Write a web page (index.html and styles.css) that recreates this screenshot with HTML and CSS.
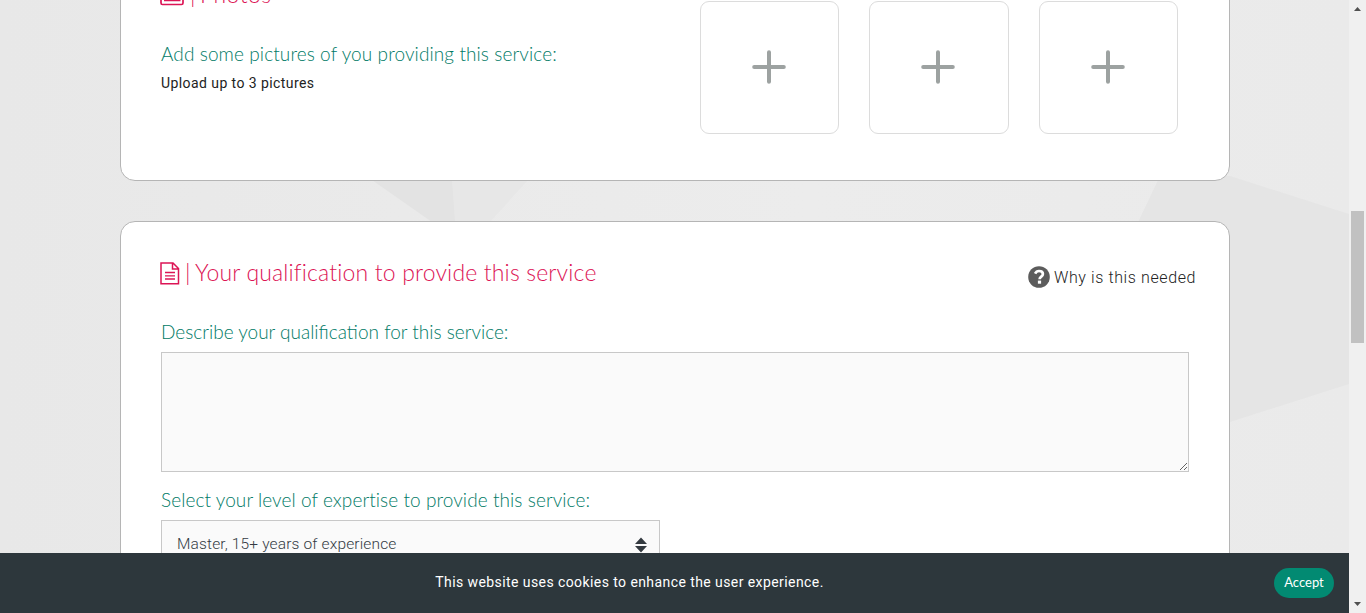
FILE: index.html
```html
<!DOCTYPE html>
<html lang="en">
<head>
<meta charset="utf-8">
<title>Your service</title>
<link rel="stylesheet" href="styles.css">
</head>
<body>
<div class="window">
  <div class="viewport">
    <main class="page">
      <svg class="backdrop" width="1349" height="553" aria-hidden="true">
        <defs><linearGradient id="base"><stop offset="0" stop-color="#e8e8e8"/><stop offset=".6" stop-color="#ececec"/><stop offset="1" stop-color="#eaeaea"/></linearGradient></defs>
        <rect width="1349" height="553" fill="url(#base)"/>
        <path d="M372 180H452L462 222H432Z" fill="#e3e3e3"/>
        <path d="M452 180H528L490 222H455Z" fill="#e7e7e7"/>
        <path d="M1160 176H1230L1349 214V384L1230 422H1120V260Z" fill="#e5e5e5"/>
      </svg>
      <section class="card card-photos">
        <div class="photos-text">
          <h2 class="title">
            <svg class="icon-photo" width="25" height="22" viewBox="0 0 25 22" fill="none" stroke="currentColor" stroke-width="1.7"><rect x="1" y="1" width="22" height="19.5" rx="1.5"/><path d="M4 17.2V13l4-4 4 4 5-5 3.5 4v5.200z" fill="currentColor" stroke="none"/></svg>
            <span class="bar">|</span><span class="title-photos">Photos</span>
          </h2>
          <p class="label label-add">Add some pictures of you providing this service:</p>
          <p class="hint">Upload up to 3 pictures</p>
        </div>
        <div class="tiles">
          <div class="tile"><svg width="34" height="34" viewBox="0 0 34 34"><path d="M17 2.200V31.800M2.200 17H31.800"/></svg></div>
          <div class="tile"><svg width="34" height="34" viewBox="0 0 34 34"><path d="M17 2.200V31.800M2.200 17H31.800"/></svg></div>
          <div class="tile"><svg width="34" height="34" viewBox="0 0 34 34"><path d="M17 2.200V31.800M2.200 17H31.800"/></svg></div>
        </div>
      </section>
      <section class="card card-qualification">
        <div class="card-head">
          <h2 class="title">
            <svg class="icon-file" width="20" height="23" viewBox="0 0 20 23" fill="none" stroke="currentColor" stroke-width="1.5"><path d="M1 1H13L18.500 6.500V21.700H1ZM12.500 1V7H18.500"/><path d="M5 10.500H15M5 13.800H15M5 17H15" stroke-width="1.300"/></svg>
            <span class="bar">|</span><span class="title-qualification">Your qualification to provide this service</span>
          </h2>
          <div class="why">
            <svg width="22" height="22" viewBox="0 0 22 22"><circle cx="11" cy="11" r="10.800" fill="#5c5c5c"/><path d="M7.100 7.600C8 5.700 9.300 5 11 5c2.300 0 3.900 1.300 3.900 3.100 0 2.600-3.300 2.500-3.300 5.100" fill="none" stroke="#fff" stroke-width="2.700"/><rect x="9.900" y="14.600" width="3.200" height="3.100" fill="#fff"/></svg>
            <span class="why-text">Why is this needed</span>
          </div>
        </div>
        <p class="label label-describe">Describe your qualification for this service:</p>
        <textarea class="textarea"></textarea>
        <p class="label label-level">Select your level of expertise to provide this service:</p>
        <div class="select">
          <span class="select-text">Master, 15+ years of experience</span>
          <svg width="12" height="16" viewBox="0 0 12 16" fill="#343a40"><path d="M6 .500 12 7H0ZM0 9H12L6 15.500Z"/></svg>
        </div>
      </section>
    </main>
    <footer class="cookies">
      <p class="cookie-text">This website uses cookies to enhance the user experience.</p>
      <button class="accept">Accept</button>
    </footer>
  </div>
  <div class="scrollbar">
    <svg width="7" height="4" viewBox="0 0 7 4" fill="#505050"><path d="M0 4 3.500 0 7 4Z"/></svg>
    <div class="thumb"></div>
    <svg class="down" width="7" height="4" viewBox="0 0 7 4" fill="#505050"><path d="M0 0H7L3.500 4Z"/></svg>
  </div>
</div>
</body>
</html>
```
FILE: styles.css
```css
* { box-sizing: border-box; }
body { margin: 0; font-family: Lato, "Open Sans", sans-serif; overflow: hidden; }
h2, p { margin: 0; font-weight: 300; white-space: nowrap; }
svg { display: block; flex: none; }
.window { display: flex; height: 613px; }
.viewport { width: 1349px; height: 613px; }
.page { position: relative; height: 553px; overflow: hidden; background: #eaeaea; }
.backdrop { position: absolute; inset: 0; }
.card { position: relative; width: 1110px; margin-left: 120px; border: 1px solid #b5b5b5; border-radius: 15px; background: #fff; padding: 33px 33px 0 40px; }
.card-photos { display: flex; height: 238px; margin-top: -57px; }
.card-qualification { height: 400px; margin-top: 40px; }
.photos-text { width: 538.7px; }
.title { display: flex; align-items: center; height: 36px; color: #dc1455; font-size: 23px; line-height: 34px; }
.title span { padding-bottom: 2px; }
.icon-photo { margin-left: -1px; }
.icon-file { margin-left: -1px; }
.bar { width: 10px; margin-left: 5px; }
.title-photos { letter-spacing: .4px; }
.title-qualification { letter-spacing: .16px; }
.label { height: 24px; line-height: 24px; color: #007a66; font-size: 19px; margin-top: 29px; }
.label-add { letter-spacing: .1px; }
.label-describe { letter-spacing: 0; }
.label-level { margin-top: 16px; letter-spacing: .08px; }
.hint { margin-top: 7px; font: 400 14px/20px Roboto, sans-serif; color: #222; letter-spacing: .42px; }
.tiles { display: flex; gap: 30px; padding-top: 24px; }
.tile { display: flex; align-items: center; justify-content: center; width: 139.500px; height: 133px; padding: 0 1px 2px 0; border: 1px solid #dcdcdc; border-radius: 9px; }
.tile path { stroke: #9da2a1; stroke-width: 4; stroke-linecap: round; }
.card-head { display: flex; justify-content: space-between; }
.why { display: flex; align-items: center; gap: 4px; padding-top: 7px; font: 300 16px Roboto, sans-serif; color: #222; }
.why-text { letter-spacing: .6px; line-height: 22px; padding-top: 2px; }
.textarea { display: block; width: 1028px; height: 120px; margin-top: 8px; border: 1px solid #c8c8c8; border-radius: 0; background: #fafafa; outline: 0; resize: both; }
.select { display: flex; align-items: center; justify-content: space-between; width: 499px; height: 50px; margin-top: 8px; padding: 0 12px 0 15px; border: 1px solid #c8c8c8; background: #fafafa; color: #343a44; font: 300 15.5px Roboto, sans-serif; }
.select-text { letter-spacing: .15px; padding-bottom: 3px; }
.cookies { display: grid; grid-template-columns: 1259px 60px; align-items: center; padding-right: 15px; column-gap: 15px; height: 60px; background: #2d373c; color: #fff; }
.cookie-text { padding-bottom: 3px; text-align: center; font: 400 14px Roboto, sans-serif; letter-spacing: .42px; }
.accept { width: 60px; height: 30px; padding: 0 0 2px; border: 0; border-radius: 15px; background: #028a72; color: #fff; font: 400 13px Lato, sans-serif; }
.scrollbar { display: flex; flex-direction: column; align-items: center; width: 17px; padding: 7px 0; background: #f0f0f0; }
.thumb { width: 13px; height: 132px; margin-top: 200px; background: #c1c1c1; }
.down { margin-top: auto; }
```
